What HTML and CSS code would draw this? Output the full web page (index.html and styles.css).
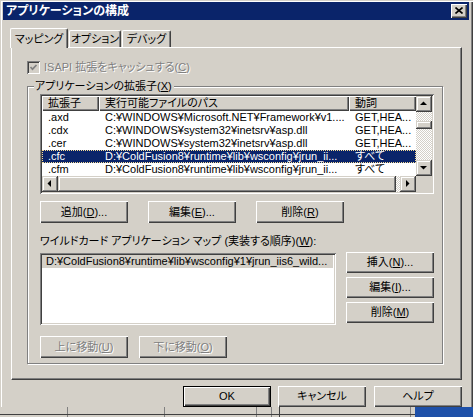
FILE: index.html
```html
<!DOCTYPE html>
<html lang="ja">
<head>
<meta charset="utf-8">
<title>アプリケーションの構成</title>
<link rel="stylesheet" href="styles.css">
</head>
<body>
<div class="window">
  <div class="titlebar">
    <span class="title">アプリケーションの構成</span>
    <span class="close"><svg width="8" height="7" viewBox="0 0 8 7"><path d="M0.5 0.5 L7.5 6.5 M7.5 0.5 L0.5 6.5" stroke="#000" stroke-width="1.6" fill="none"/></svg></span>
  </div>
  <div class="dlg">
    <div class="tabs">
      <div class="tab active">マッピング</div>
      <div class="tab t2">オプション</div>
      <div class="tab t3">デバッグ</div>
    </div>
    <div class="panel">
      <div class="checkrow">
        <span class="cb"><svg width="13" height="13" viewBox="0 0 13 13"><path d="M3.5 6 L5.5 8.2 L9.5 4" stroke="#808080" stroke-width="1.7" fill="none"/></svg></span>
        <span class="dis">ISAPI 拡張をキャッシュする(<u>C</u>)</span>
      </div>
      <div class="group">
        <span class="legend">アプリケーションの拡張子(<u>X</u>)</span>
        <div class="lv">
          <div class="lv-main">
            <div class="lv-head">
              <div class="hc c1">拡張子</div>
              <div class="hc c2">実行可能ファイルのパス</div>
              <div class="hc c3">動詞</div>
            </div>
            <div class="row"><span class="c1">.axd</span><span class="c2">C:¥WINDOWS¥Microsoft.NET¥Framework¥v1....</span><span class="c3">GET,HEA...</span></div>
            <div class="row"><span class="c1">.cdx</span><span class="c2">C:¥WINDOWS¥system32¥inetsrv¥asp.dll</span><span class="c3">GET,HEA...</span></div>
            <div class="row"><span class="c1">.cer</span><span class="c2">C:¥WINDOWS¥system32¥inetsrv¥asp.dll</span><span class="c3">GET,HEA...</span></div>
            <div class="row sel"><span class="c1">.cfc</span><span class="c2">D:¥ColdFusion8¥runtime¥lib¥wsconfig¥jrun_ii...</span><span class="c3">すべて</span></div>
            <div class="row"><span class="c1">.cfm</span><span class="c2">D:¥ColdFusion8¥runtime¥lib¥wsconfig¥jrun_ii...</span><span class="c3">すべて</span></div>
          </div>
          <div class="vs">
            <div class="sbtn"><svg width="16" height="16" viewBox="0 0 16 16"><path d="M4 9 L11 9 L7.5 5.5 Z" fill="#000"/></svg></div>
            <div class="track"><div class="thumb-v"></div></div>
            <div class="sbtn"><svg width="16" height="16" viewBox="0 0 16 16"><path d="M4 6 L11 6 L7.5 9.5 Z" fill="#000"/></svg></div>
          </div>
          <div class="hs">
            <div class="sbtn"><svg width="16" height="16" viewBox="0 0 16 16"><path d="M9 4 L9 11 L5.5 7.5 Z" fill="#000"/></svg></div>
            <div class="thumb-h"></div>
            <div class="track"></div>
            <div class="sbtn"><svg width="16" height="16" viewBox="0 0 16 16"><path d="M6 4 L6 11 L9.5 7.5 Z" fill="#000"/></svg></div>
          </div>
          <div class="corner"></div>
        </div>
        <div class="btnrow">
          <button class="btn">追加(<u>D</u>)...</button>
          <button class="btn">編集(<u>E</u>)...</button>
          <button class="btn">削除(<u>R</u>)</button>
        </div>
        <div class="label">ワイルドカード アプリケーション マップ (実装する順序)(<u>W</u>):</div>
        <div class="wildrow">
          <div class="wl"><div class="wrow">D:¥ColdFusion8¥runtime¥lib¥wsconfig¥1¥jrun_iis6_wild...</div></div>
          <div class="side">
            <button class="btn">挿入(<u>N</u>)...</button>
            <button class="btn">編集(<u>I</u>)...</button>
            <button class="btn">削除(<u>M</u>)</button>
          </div>
        </div>
        <div class="moverow">
          <button class="btn dis-btn">上に移動(<u>U</u>)</button>
          <button class="btn dis-btn">下に移動(<u>O</u>)</button>
        </div>
      </div>
    </div>
    <div class="footer">
      <button class="btn default">OK</button>
      <button class="btn">キャンセル</button>
      <button class="btn help">ヘルプ</button>
    </div>
  </div>
</div>
<div class="below">
  <div class="bgwin"></div>
  <div class="desk"></div>
</div>
</body>
</html>
```
FILE: styles.css
```css
* { box-sizing: border-box; }
html, body { margin: 0; padding: 0; }
body {
  width: 473px;
  height: 417px;
  overflow: hidden;
  background: #D4D0C8;
  font-family: "Liberation Sans", "Noto Sans CJK JP", sans-serif;
  font-size: 11px;
  line-height: 13px;
  font-feature-settings: "palt";
  color: #000;
}
u { text-decoration: underline; text-underline-offset: 1px; }

.window {
  width: 473px;
  height: 407px;
  padding: 2px 4px 0 3px;
  background: #D4D0C8;
  box-shadow: inset 1px 1px 0 #D4D0C8, inset 2px 2px 0 #fff, inset -1px 0 0 #404040, inset -2px 0 0 #808080;
}
.titlebar {
  height: 18px;
  background: #0A246A;
  color: #fff;
  display: flex;
  align-items: center;
  justify-content: space-between;
  padding: 0 2px 0 3px;
}
.title { font-weight: bold; font-size: 12px; }
.close {
  width: 16px;
  height: 14px;
  background: #D4D0C8;
  box-shadow: inset 1px 1px 0 #fff, inset -1px -1px 0 #404040, inset -2px -2px 0 #808080;
  display: flex;
  align-items: center;
  justify-content: center;
  padding: 0 1px 1px 0;
}
.close svg { display: block; }

.dlg { padding: 8px 7px 0 8px; }
.tabs {
  display: flex;
  align-items: flex-end;
  height: 19px;
  margin-left: -1px;
  position: relative;
  z-index: 1;
}
.tab {
  height: 17px;
  display: flex;
  align-items: center;
  justify-content: center;
  border-top: 1px solid #fff;
  border-left: 1px solid #fff;
  border-right: 1px solid #404040;
  box-shadow: inset -1px 0 0 #808080;
  border-radius: 2px 2px 0 0;
  background: #D4D0C8;
  white-space: nowrap;
}
.tab.active { height: 20px; width: 58px; margin-bottom: -1px; padding-top: 1px; }
.tab.t2 { width: 52px; margin-left: 1px; }
.tab.t3 { width: 49px; margin-left: 1px; }

.panel {
  height: 333px;
  border: 1px solid;
  border-color: #fff #404040 #404040 #fff;
  box-shadow: inset -1px -1px 0 #808080;
  padding: 13px 0 0 15px;
}
.checkrow { display: flex; align-items: center; gap: 4px; height: 13px; }
.cb {
  width: 13px;
  height: 13px;
  background: #D4D0C8;
  box-shadow: inset 1px 1px 0 #808080, inset -1px -1px 0 #fff, inset 2px 2px 0 #404040, inset -2px -2px 0 #D4D0C8;
}
.cb svg { display: block; }
.dis { color: #808080; text-shadow: 1px 1px 0 #fff; }

.group {
  position: relative;
  margin-top: 12px;
  width: 416px;
  height: 278px;
  border: 1px solid #808080;
  box-shadow: inset 1px 1px 0 #fff, 1px 1px 0 #fff;
  padding: 7px 0 0 12px;
}
.legend {
  position: absolute;
  left: 6px;
  top: -7px;
  background: #D4D0C8;
  padding: 0 2px 0 1px;
  white-space: nowrap;
}

.lv {
  width: 394px;
  height: 100px;
  background: #fff;
  box-shadow: inset 1px 1px 0 #808080, inset -1px -1px 0 #fff, inset 2px 2px 0 #404040, inset -2px -2px 0 #D4D0C8;
  padding: 2px;
  display: grid;
  grid-template-columns: 374px 16px;
  grid-template-rows: 80px 16px;
}
.lv-main { overflow: hidden; }
.lv-head { display: flex; height: 15px; }
.hc {
  height: 15px;
  background: #D4D0C8;
  box-shadow: inset 1px 1px 0 #fff, inset -1px -1px 0 #404040, inset -2px -2px 0 #808080;
  padding-left: 6px;
  line-height: 14px;
  white-space: nowrap;
  overflow: hidden;
}
.c1 { width: 57px; flex: none; }
.c2 { width: 250px; flex: none; }
.c3 { width: 67px; flex: none; }
.row { display: flex; height: 13px; white-space: nowrap; }
.row > span { padding-left: 6px; overflow: hidden; }
.row.sel {
  background: #0A246A;
  color: #fff;
  outline: 1px dotted #F5DB95;
  outline-offset: -1px;
}

.sbtn {
  width: 16px;
  height: 16px;
  flex: none;
  background: #D4D0C8;
  box-shadow: inset -1px -1px 0 #404040, inset 1px 1px 0 #D4D0C8, inset -2px -2px 0 #808080, inset 2px 2px 0 #fff;
}
.sbtn svg { display: block; }
.track {
  flex: 1;
  background: repeating-conic-gradient(#fff 0 25%, #D4D0C8 0 50%) 0 0 / 2px 2px;
}
.vs { display: flex; flex-direction: column; }
.thumb-v {
  height: 8px;
  margin-top: 9px;
  background: #D4D0C8;
  box-shadow: inset -1px -1px 0 #404040, inset 1px 1px 0 #D4D0C8, inset -2px -2px 0 #808080, inset 2px 2px 0 #fff;
}
.hs { display: flex; }
.thumb-h {
  width: 338px;
  flex: none;
  background: #D4D0C8;
  box-shadow: inset -1px -1px 0 #404040, inset 1px 1px 0 #D4D0C8, inset -2px -2px 0 #808080, inset 2px 2px 0 #fff;
}
.corner { background: #D4D0C8; }

.btn {
  width: 88px;
  height: 22px;
  padding: 0;
  border: none;
  background: #D4D0C8;
  box-shadow: inset 1px 1px 0 #fff, inset -1px -1px 0 #404040, inset -2px -2px 0 #808080;
  font: inherit;
  color: #000;
  display: flex;
  align-items: center;
  justify-content: center;
  white-space: nowrap;
}
.btn.dis-btn { color: #808080; text-shadow: 1px 1px 0 #fff; }
.btnrow { display: flex; gap: 20px; margin-top: 7px; }
.label { margin-top: 12px; height: 13px; white-space: nowrap; }
.wildrow { display: flex; gap: 10px; margin-top: 4px; }
.wl {
  width: 296px;
  height: 72px;
  margin-top: 1px;
  padding: 2px;
  background: #fff;
  box-shadow: inset 1px 1px 0 #808080, inset -1px -1px 0 #fff, inset 2px 2px 0 #404040, inset -2px -2px 0 #D4D0C8;
}
.wrow {
  background: #D4D0C8;
  height: 13px;
  padding-left: 4px;
  margin-right: 1px;
  white-space: nowrap;
  overflow: hidden;
}
.side { display: flex; flex-direction: column; gap: 4px; }
.side .btn { height: 21px; }
.moverow { display: flex; gap: 11px; margin-top: 11px; }

.footer { display: flex; justify-content: flex-end; gap: 7px; margin-top: 6px; }
.footer .btn { height: 21px; }
.footer .help { margin-left: 1px; }
.btn.default {
  box-shadow: inset 0 0 0 1px #000, inset 2px 2px 0 #fff, inset -2px -2px 0 #404040, inset -3px -3px 0 #808080;
}

.below { display: flex; height: 10px; }
.bgwin {
  flex: 1;
  background:
    linear-gradient(#404040, #404040) 0 7px / 100% 1px no-repeat,
    linear-gradient(#808080, #808080) 67px 0 / 1px 100% no-repeat,
    linear-gradient(#808080, #808080) 164px 0 / 1px 100% no-repeat,
    linear-gradient(#808080, #808080) 256px 0 / 1px 100% no-repeat,
    linear-gradient(#808080, #808080) 271px 0 / 1px 100% no-repeat,
    linear-gradient(#404040, #404040) 279px 0 / 1px 100% no-repeat,
    linear-gradient(#808080, #808080) 410px 0 / 1px 100% no-repeat,
    #D4D0C8;
}
.desk { width: 58px; background: #1E50A8; }
```
